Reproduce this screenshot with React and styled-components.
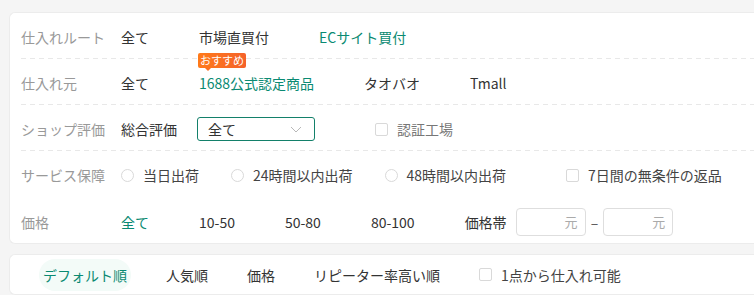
import styled, { createGlobalStyle } from 'styled-components';

const GlobalStyle = createGlobalStyle`
  html, body {
    margin: 0;
    background: #f5f5f5;
    font-family: "Noto Sans CJK JP", "Noto Sans", sans-serif;
    font-size: 14px;
    color: #333;
  }
`

const routes = ['全て', '市場直買付', 'ECサイト買付']
const sources = ['全て', '1688公式認定商品', 'タオバオ', 'Tmall']
const prices = ['全て', '10-50', '50-80', '80-100']
const sorts = ['デフォルト順', '人気順', '価格', 'リピーター率高い順']

const Chevron = () => (
    <svg width="12" height="7" viewBox="0 0 12 7" fill="none">
        <path d="M1 1l5 5 5-5" stroke="#b8b8b8" strokeWidth="1" />
    </svg>
)

const App = () => {
    return(
        <>
        <GlobalStyle/>
        <Page>
            <FilterCard>
                <Row $dashed>
                    <Label>仕入れルート</Label>
                    <Options>
                        {routes.map((r)=> <Option key={r} $active={r === 'ECサイト買付'}>{r}</Option>)}
                    </Options>
                </Row>
                <Row $dashed>
                    <Label>仕入れ元</Label>
                    <Options>
                        {sources.map((s)=> (
                            <Option key={s} $active={s === '1688公式認定商品'}>
                                {s === '1688公式認定商品' && <Badge>おすすめ</Badge>}
                                {s}
                            </Option>
                        ))}
                    </Options>
                </Row>
                <Row $dashed>
                    <Label>ショップ評価</Label>
                    <Option>総合評価</Option>
                    <Select>
                        <span>全て</span>
                        <Chevron/>
                    </Select>
                    <CheckItem $muted $offset={60}>
                        <Box/>
                        認証工場
                    </CheckItem>
                </Row>
                <Row>
                    <Label>サービス保障</Label>
                    <RadioGroup>
                        <CheckItem><Radio/>当日出荷</CheckItem>
                        <CheckItem><Radio/>24時間以内出荷</CheckItem>
                        <CheckItem><Radio/>48時間以内出荷</CheckItem>
                    </RadioGroup>
                    <CheckItem $offset={60}><Box/>7日間の無条件の返品</CheckItem>
                </Row>
                <Row $tall>
                    <Label>価格</Label>
                    <Options>
                        {prices.map((p)=> <Option key={p} $active={p === '全て'}>{p}</Option>)}
                        <Option>価格帯</Option>
                    </Options>
                    <Range>
                        <PriceInput>元</PriceInput>
                        <Dash>–</Dash>
                        <PriceInput>元</PriceInput>
                    </Range>
                </Row>
            </FilterCard>
            <SortCard>
                {sorts.map((s)=> <SortItem key={s} $active={s === 'デフォルト順'}>{s}</SortItem>)}
                <CheckItem $offset={4}><Box/>1点から仕入れ可能</CheckItem>
            </SortCard>
        </Page>
        </>
    )
}

export default App;

const Page = styled.div`
    padding: 12px 0 0 9px;
`

const Card = styled.div`
    background: #fff;
    border: 1px solid #ececec;
    border-right: none;
    border-radius: 6px 0 0 6px;
    box-sizing: border-box;
`

const FilterCard = styled(Card)`
    padding: 0 0 0 11px;
    height: 232px;
`

const Row = styled.div`
    display: flex;
    align-items: center;
    height: ${(props)=> props.$tall ? '47px' : '46px'};
    padding-top: 2px;
    box-sizing: border-box;
    background: ${(props)=> props.$dashed
        ? 'repeating-linear-gradient(to right, #e8e8e8 0 5px, transparent 5px 9px) left bottom / 100% 1px no-repeat'
        : 'none'};
`

const Label = styled.div`
    width: 100px;
    flex-shrink: 0;
    color: #999;
    white-space: nowrap;
`

const Options = styled.div`
    display: flex;
    align-items: center;
    gap: 50px;
`

const Option = styled.div`
    position: relative;
    white-space: nowrap;
    color: ${(props)=> props.$active ? '#0a8a72' : '#333'};
    cursor: pointer;
`

const Badge = styled.span`
    position: absolute;
    left: -1px;
    top: -20px;
    height: 15px;
    padding: 0 2px;
    border-radius: 2px;
    background: linear-gradient(90deg, #ff7a1a, #f5622a);
    color: #fff;
    font-size: 11px;
    line-height: 15px;
    white-space: nowrap;

    &::after {
        content: '';
        position: absolute;
        left: 7px;
        bottom: -3px;
        border-left: 3px solid transparent;
        border-right: 3px solid transparent;
        border-top: 3px solid #fb7020;
    }
`

const Select = styled.div`
    display: flex;
    align-items: center;
    justify-content: space-between;
    width: 118px;
    height: 24px;
    margin-left: 20px;
    padding: 0 12px 0 10px;
    box-sizing: border-box;
    border: 1px solid #13806a;
    border-radius: 3px;
    color: #333;
`

const RadioGroup = styled.div`
    display: flex;
    align-items: center;
    gap: 32px;
`

const CheckItem = styled.label`
    display: flex;
    align-items: center;
    gap: 9px;
    margin-left: ${(props)=> props.$offset || 0}px;
    color: ${(props)=> props.$muted ? '#777' : '#444'};
    white-space: nowrap;
`

const Box = styled.span`
    width: 13px;
    height: 13px;
    box-sizing: border-box;
    border: 1px solid #d9d9d9;
    border-radius: 2px;
    background: #fff;
`

const Radio = styled(Box)`
    border-radius: 50%;
`

const Range = styled.div`
    display: flex;
    align-items: center;
    gap: 5px;
    margin-left: 9px;
`

const PriceInput = styled.div`
    width: 70px;
    height: 28px;
    box-sizing: border-box;
    border: 1px solid #dedede;
    border-radius: 4px;
    display: flex;
    align-items: center;
    justify-content: flex-end;
    padding-right: 7px;
    color: #aaa;
    font-size: 13px;
`

const Dash = styled.span`
    color: #555;
`

const SortCard = styled(Card)`
    margin-top: 10px;
    height: 41px;
    display: flex;
    align-items: center;
    gap: 31px;
    padding: 0 0 0 29px;
`

const SortItem = styled.div`
    height: 32px;
    padding: 0 4px;
    border-radius: 16px;
    display: flex;
    align-items: center;
    color: ${(props)=> props.$active ? '#0a8a72' : '#333'};
    background: ${(props)=> props.$active ? '#f3fbf8' : 'transparent'};
    white-space: nowrap;
`
